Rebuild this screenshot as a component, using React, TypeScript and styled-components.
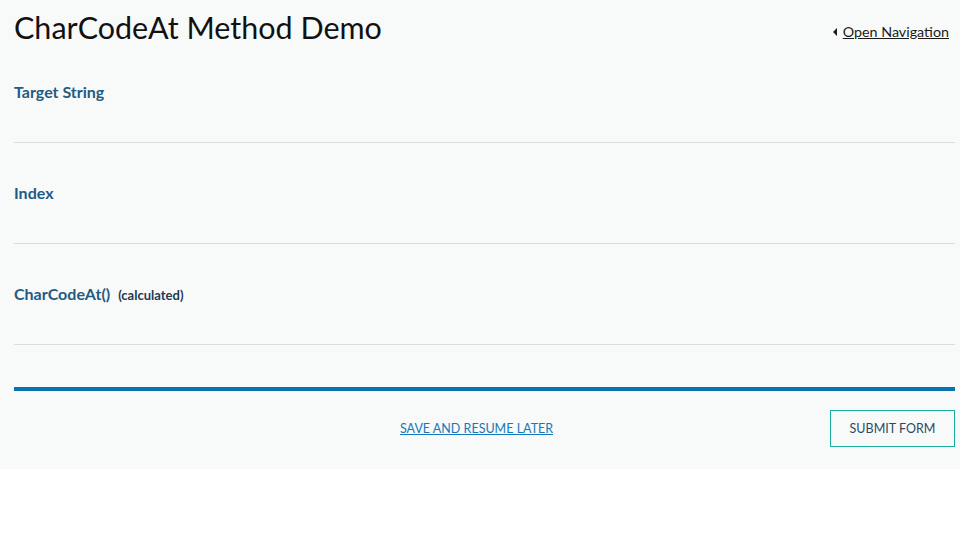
import React from "react";
import styled, { createGlobalStyle } from "styled-components";

const Global = createGlobalStyle`
  html, body { margin: 0; padding: 0; background: #ffffff; }
  body { font-family: Lato, "Open Sans", Arial, sans-serif; }
  * { box-sizing: border-box; }
`;

const Page = styled.div`
  background: #f8f9f9;
  padding: 0 5px 0 14px;
`;

const Header = styled.header`
  display: flex;
  justify-content: space-between;
  align-items: flex-start;
  padding-top: 9px;
  height: 42px;
`;

const Title = styled.h1`
  margin: 0;
  font-family: Lato, sans-serif;
  font-weight: 400;
  font-size: 30.5px;
  line-height: 36px;
  color: #111111;
`;

const NavLink = styled.a`
  display: flex;
  align-items: center;
  gap: 6px;
  margin-top: 14px;
  margin-right: 6px;
  font-size: 14.3px;
  line-height: 18px;
  color: #1b1b1b;
  text-decoration: underline;
  cursor: pointer;
`;

const Caret = styled.span`
  width: 0;
  height: 0;
  border-top: 4px solid transparent;
  border-bottom: 4px solid transparent;
  border-right: 4px solid #1b1b1b;
`;

const Field = styled.div`
  padding: 40px 0;
  border-bottom: 1px solid #dcdddd;
`;

const Label = styled.label`
  display: flex;
  align-items: baseline;
  gap: 8px;
  height: 20px;
  font-size: 16px;
  font-weight: 700;
  line-height: 20px;
  color: #1f5b84;
`;

const Note = styled.span`
  font-size: 13px;
  font-weight: 700;
  color: #1d3a52;
`;

const Bar = styled.div`
  margin-top: 42px;
  height: 4px;
  background: #0a73b1;
`;

const Footer = styled.div`
  display: flex;
  align-items: center;
  padding: 19px 0 22px;
`;

const SaveLink = styled.a`
  margin-left: 386px;
  margin-right: auto;
  font-size: 12.5px;
  line-height: 16px;
  color: #1479b8;
  text-decoration: underline;
  text-transform: uppercase;
  cursor: pointer;
`;

const SubmitButton = styled.button`
  width: 125px;
  height: 37px;
  padding: 0;
  background: transparent;
  border: 1px solid #1aae9a;
  font-family: Lato, sans-serif;
  font-size: 12.5px;
  color: #2c4a63;
  text-transform: uppercase;
  cursor: pointer;
`;

export default function App() {
  return (
    <>
      <Global />
      <Page>
        <Header>
          <Title>CharCodeAt Method Demo</Title>
          <NavLink>
            <Caret />
            Open Navigation
          </NavLink>
        </Header>
        <Field>
          <Label>Target String</Label>
        </Field>
        <Field>
          <Label>Index</Label>
        </Field>
        <Field>
          <Label>
            CharCodeAt() <Note>(calculated)</Note>
          </Label>
        </Field>
        <Bar />
        <Footer>
          <SaveLink>Save and Resume Later</SaveLink>
          <SubmitButton>Submit Form</SubmitButton>
        </Footer>
      </Page>
    </>
  );
}
